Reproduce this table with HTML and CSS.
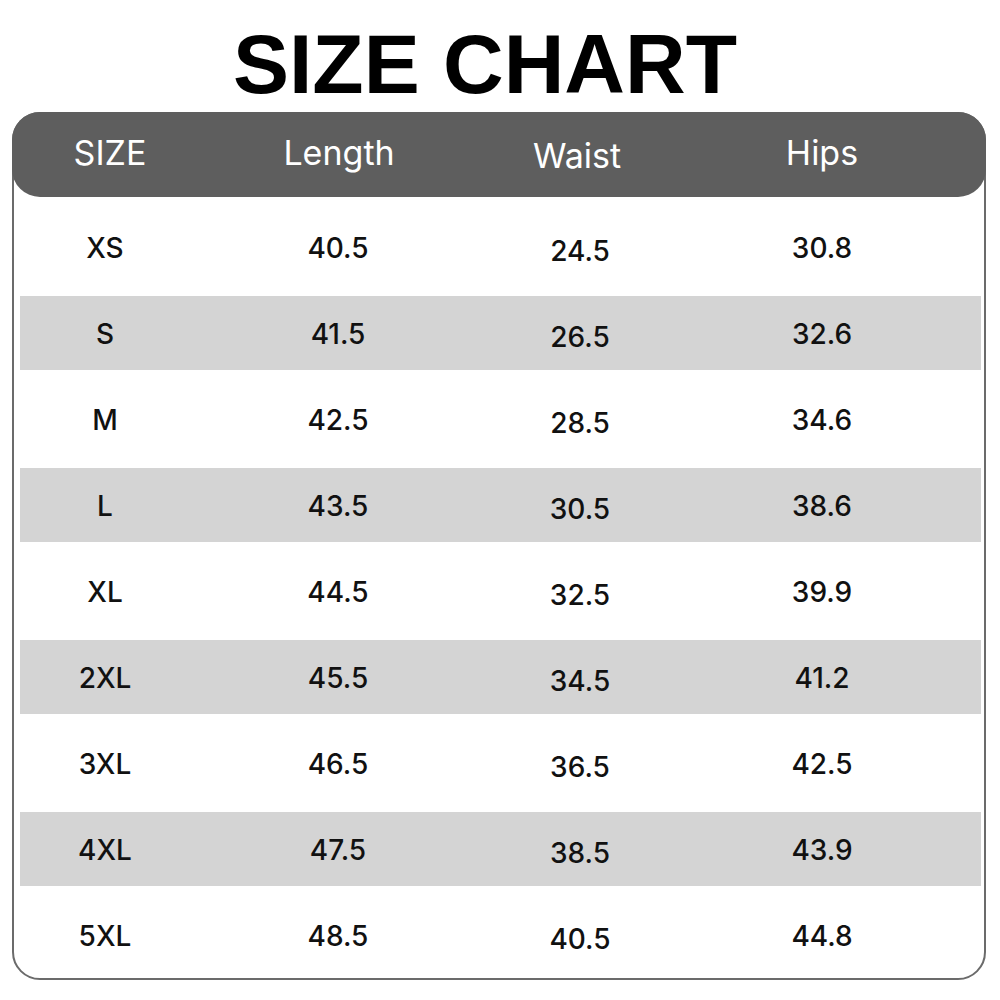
FILE: index.html
```html
<!DOCTYPE html>
<html lang="en">
<head>
<meta charset="utf-8">
<title>Size Chart</title>
<link rel="stylesheet" href="styles.css">
</head>
<body>
<main class="page">
  <h1 class="title">SIZE CHART</h1>
  <section class="chart">
    <div class="chart-head">
      <span class="head-cell">SIZE</span>
      <span class="head-cell">Length</span>
      <span class="head-cell head-waist">Waist</span>
      <span class="head-cell">Hips</span>
    </div>
    <div class="chart-body">
      <div class="row"><span class="cell">XS</span><span class="cell">40.5</span><span class="cell cell-waist">24.5</span><span class="cell">30.8</span></div>
      <div class="row row-alt"><span class="cell">S</span><span class="cell">41.5</span><span class="cell cell-waist">26.5</span><span class="cell">32.6</span></div>
      <div class="row"><span class="cell">M</span><span class="cell">42.5</span><span class="cell cell-waist">28.5</span><span class="cell">34.6</span></div>
      <div class="row row-alt"><span class="cell">L</span><span class="cell">43.5</span><span class="cell cell-waist">30.5</span><span class="cell">38.6</span></div>
      <div class="row"><span class="cell">XL</span><span class="cell">44.5</span><span class="cell cell-waist">32.5</span><span class="cell">39.9</span></div>
      <div class="row row-alt"><span class="cell">2XL</span><span class="cell">45.5</span><span class="cell cell-waist">34.5</span><span class="cell">41.2</span></div>
      <div class="row"><span class="cell">3XL</span><span class="cell">46.5</span><span class="cell cell-waist">36.5</span><span class="cell">42.5</span></div>
      <div class="row row-alt"><span class="cell">4XL</span><span class="cell">47.5</span><span class="cell cell-waist">38.5</span><span class="cell">43.9</span></div>
      <div class="row"><span class="cell">5XL</span><span class="cell">48.5</span><span class="cell cell-waist">40.5</span><span class="cell">44.8</span></div>
    </div>
  </section>
</main>
</body>
</html>
```

FILE: styles.css
```css
* {
  box-sizing: border-box;
}

html, body {
  margin: 0;
  padding: 0;
  background: #ffffff;
}

.page {
  width: 1000px;
  height: 1000px;
  display: flex;
  flex-direction: column;
}

.title {
  margin: 22px 0 0 0;
  padding-right: 30px;
  font-family: "Liberation Sans", Arial, sans-serif;
  font-weight: 700;
  font-size: 84px;
  line-height: 84px;
  text-align: center;
  color: #000000;
  letter-spacing: 0;
}

.chart {
  margin: 6px 0 0 12px;
  width: 974px;
  border: 2px solid #6b6b6b;
  border-radius: 28px;
  display: flex;
  flex-direction: column;
}

.chart-head {
  margin: -2px -2px 0 -2px;
  height: 85px;
  background: #5e5e5e;
  border-radius: 28px;
  display: grid;
  grid-template-columns: 196px 262px 214px 276px;
  align-items: center;
  padding-bottom: 4px;
  font-family: Inter, "Noto Sans", sans-serif;
  font-size: 34px;
  font-weight: 400;
  color: #ffffff;
}

.head-cell {
  text-align: center;
}

.head-waist {
  padding-top: 6px;
}

.chart-body {
  display: grid;
  grid-auto-rows: 74px;
  row-gap: 12px;
  padding: 13px 3px 6px 6px;
}

.row {
  display: grid;
  grid-template-columns: 170px 296px 188px 296px;
  align-items: center;
  font-family: Inter, "Noto Sans", sans-serif;
  font-size: 28px;
  font-weight: 500;
  color: #111111;
}

.row-alt {
  background: #d4d4d4;
}

.cell {
  text-align: center;
  padding-top: 2px;
}

.cell-waist {
  padding-top: 8px;
}
```
